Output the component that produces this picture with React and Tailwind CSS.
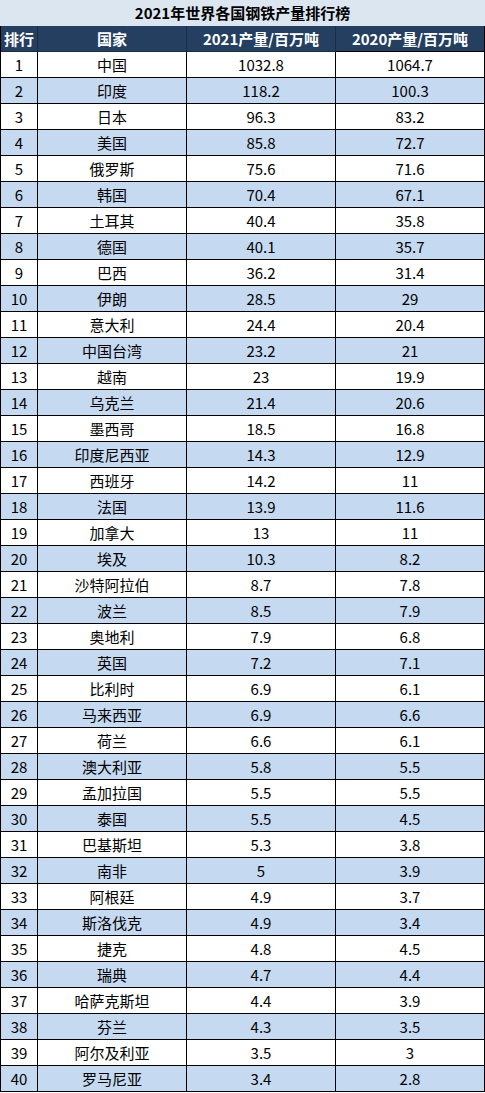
const ROWS = [
  ['中国', '1032.8', '1064.7'],
  ['印度', '118.2', '100.3'],
  ['日本', '96.3', '83.2'],
  ['美国', '85.8', '72.7'],
  ['俄罗斯', '75.6', '71.6'],
  ['韩国', '70.4', '67.1'],
  ['土耳其', '40.4', '35.8'],
  ['德国', '40.1', '35.7'],
  ['巴西', '36.2', '31.4'],
  ['伊朗', '28.5', '29'],
  ['意大利', '24.4', '20.4'],
  ['中国台湾', '23.2', '21'],
  ['越南', '23', '19.9'],
  ['乌克兰', '21.4', '20.6'],
  ['墨西哥', '18.5', '16.8'],
  ['印度尼西亚', '14.3', '12.9'],
  ['西班牙', '14.2', '11'],
  ['法国', '13.9', '11.6'],
  ['加拿大', '13', '11'],
  ['埃及', '10.3', '8.2'],
  ['沙特阿拉伯', '8.7', '7.8'],
  ['波兰', '8.5', '7.9'],
  ['奥地利', '7.9', '6.8'],
  ['英国', '7.2', '7.1'],
  ['比利时', '6.9', '6.1'],
  ['马来西亚', '6.9', '6.6'],
  ['荷兰', '6.6', '6.1'],
  ['澳大利亚', '5.8', '5.5'],
  ['孟加拉国', '5.5', '5.5'],
  ['泰国', '5.5', '4.5'],
  ['巴基斯坦', '5.3', '3.8'],
  ['南非', '5', '3.9'],
  ['阿根廷', '4.9', '3.7'],
  ['斯洛伐克', '4.9', '3.4'],
  ['捷克', '4.8', '4.5'],
  ['瑞典', '4.7', '4.4'],
  ['哈萨克斯坦', '4.4', '3.9'],
  ['芬兰', '4.3', '3.5'],
  ['阿尔及利亚', '3.5', '3'],
  ['罗马尼亚', '3.4', '2.8'],
]

const font = { fontFamily: '"Noto Sans CJK SC", "Noto Sans", sans-serif' }
const cols = 'grid grid-cols-[37px_149px_149px_149px]'

export default function App() {
  return (
    <div className="w-[485px] bg-white text-black" style={font}>
      <div className="h-[26px] bg-[#dce6f1] text-center text-[15px] font-bold leading-[26px]">
        2021年世界各国钢铁产量排行榜
      </div>
      <div className="w-[484px] border-l border-black">
        <div className={`${cols} h-[26px] bg-[#243f60] text-[15px] font-bold leading-[25px] text-white`}>
          <div className="border-r border-b border-[#1a2d45] text-center">排行</div>
          <div className="border-r border-b border-[#1a2d45] text-center">国家</div>
          <div className="border-r border-b border-[#1a2d45] text-center">2021产量/百万吨</div>
          <div className="border-r border-b border-black text-center">2020产量/百万吨</div>
        </div>
        {ROWS.map(([name, a, b], i) => (
          <div
            key={name}
            className={`${cols} h-[26px] text-[15px] leading-[25px] ${i % 2 === 1 ? 'bg-[#c5d9f1]' : 'bg-white'}`}
          >
            <div className="border-r border-b border-black text-center">{i + 1}</div>
            <div className="border-r border-b border-black text-center">{name}</div>
            <div className="border-r border-b border-black text-center">{a}</div>
            <div className="border-r border-b border-black text-center">{b}</div>
          </div>
        ))}
      </div>
    </div>
  )
}
